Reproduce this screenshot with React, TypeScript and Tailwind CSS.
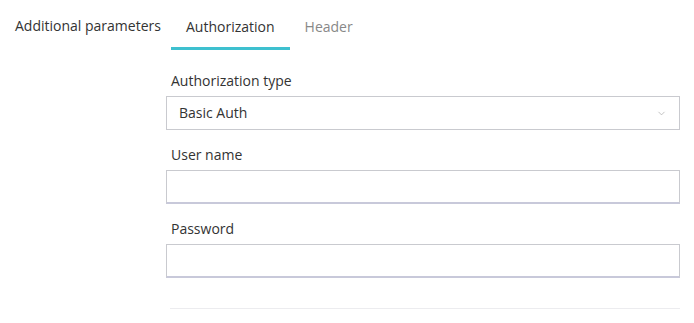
import { ChevronDown } from 'lucide-react';

function Field({ label, children }: { label: string; children: React.ReactNode }) {
  return (
    <div className="mt-[15px] first:mt-0">
      <label className="block pl-[5px] mb-[5px] leading-[20px] text-[#333]">{label}</label>
      {children}
    </div>
  );
}

export default function App() {
  return (
    <div className="flex w-[694px] h-[323px] bg-white font-['Open_Sans',sans-serif] text-[14px] text-[#333]">
      <div className="w-[166px] shrink-0 pl-[15px] pt-[16px] leading-[20px]">Additional parameters</div>

      <div className="w-[514px]">
        {/* Tabs */}
        <div className="flex h-[50px] ml-[5px]">
          <button className="h-[50px] px-[15px] pt-[7px] border-b-[3px] border-[#3ec0cf] leading-[20px] text-[#333] self-start">
            Authorization
          </button>
          <button className="h-[50px] px-[15px] pt-[7px] border-b-[3px] border-transparent leading-[20px] text-[#888] self-start">
            Header
          </button>
        </div>

        <div className="mt-[21px]">
          <Field label="Authorization type">
            <div className="flex items-center justify-between h-[34px] border border-[#c9cacf] pl-[12px] pr-[12px]">
              <span className="leading-[20px]">Basic Auth</span>
              <ChevronDown className="w-[11px] h-[11px] text-[#a8a8a8]" strokeWidth={1.5} />
            </div>
          </Field>

          <Field label="User name">
            <input className="block w-full h-[34px] border border-[#c9cacf] border-b-[#c8c9da] border-b-2 outline-none px-[12px]" />
          </Field>

          <Field label="Password">
            <input type="password" className="block w-full h-[34px] border border-[#c9cacf] border-b-[#c8c9da] border-b-2 outline-none px-[12px]" />
          </Field>
        </div>

        <div className="ml-[4px] mt-[30px] border-t border-[#ececef]" />
      </div>
    </div>
  );
}
